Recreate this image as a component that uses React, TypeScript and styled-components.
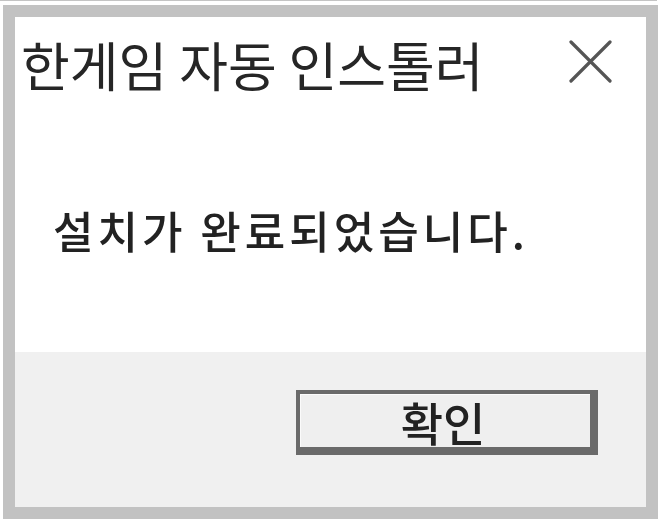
import React from "react";
import styled, { createGlobalStyle } from "styled-components";

const Global = createGlobalStyle`
  html, body { margin: 0; padding: 0; background: #ffffff; }
  body { font-family: "Noto Sans CJK KR", "Noto Sans", sans-serif; }
`;

const Page = styled.div`
  width: 662px;
  height: 527px;
  overflow: hidden;
  background: #ffffff;
`;

const TopLine = styled.div`
  width: 657px;
  height: 1px;
  background: #c4c4c4;
`;

const Frame = styled.div`
  box-sizing: border-box;
  margin: 4px 0 0 3px;
  width: 655px;
  height: 514px;
  border: 12px solid #c2c2c2;
  display: flex;
  flex-direction: column;
  filter: blur(0.6px);
`;

const Content = styled.div`
  background: #ffffff;
  height: 335px;
  display: flex;
  flex-direction: column;
`;

const TitleBar = styled.div`
  box-sizing: border-box;
  display: flex;
  align-items: flex-start;
  justify-content: space-between;
  height: 100px;
  padding: 21px 34px 0 6px;
`;

const Title = styled.div`
  font-size: 53px;
  color: #262626;
  line-height: 1;
  white-space: nowrap;
`;

const CloseWrap = styled.div`
  margin-top: 2px;
  display: flex;
`;

const Message = styled.div`
  margin-top: 91px;
  padding-left: 38px;
  font-size: 44px;
  font-weight: 500;
  letter-spacing: 4px;
  color: #222222;
  line-height: 1;
  white-space: nowrap;
`;

const Footer = styled.div`
  flex: 1;
  background: #f0f0f0;
  display: flex;
  justify-content: flex-end;
  align-items: flex-start;
  padding: 38px 48px 0 0;
`;

const Button = styled.button`
  box-sizing: border-box;
  width: 302px;
  height: 65px;
  background: #efefef;
  border-style: solid;
  border-color: #6a6a6a;
  border-width: 4px 8px 8px 4px;
  box-shadow: inset 1px 1px 0 #fbfbfb;
  font-family: "Noto Sans CJK KR", sans-serif;
  font-size: 46px;
  font-weight: 500;
  color: #222222;
  line-height: 1;
  padding: 0 4px 0 0;
  display: flex;
  align-items: center;
  justify-content: center;
`;

const CloseIcon = () => (
  <svg width="43" height="43" viewBox="0 0 43 43">
    <path d="M2 2 L41 41 M41 2 L2 41" stroke="#555555" strokeWidth="3.2" strokeLinecap="round" fill="none" />
  </svg>
);

export default function App() {
  return (
    <Page>
      <Global />
      <TopLine />
      <Frame>
        <Content>
          <TitleBar>
            <Title>한게임 자동 인스톨러</Title>
            <CloseWrap>
              <CloseIcon />
            </CloseWrap>
          </TitleBar>
          <Message>설치가 완료되었습니다.</Message>
        </Content>
        <Footer>
          <Button>확인</Button>
        </Footer>
      </Frame>
    </Page>
  );
}
